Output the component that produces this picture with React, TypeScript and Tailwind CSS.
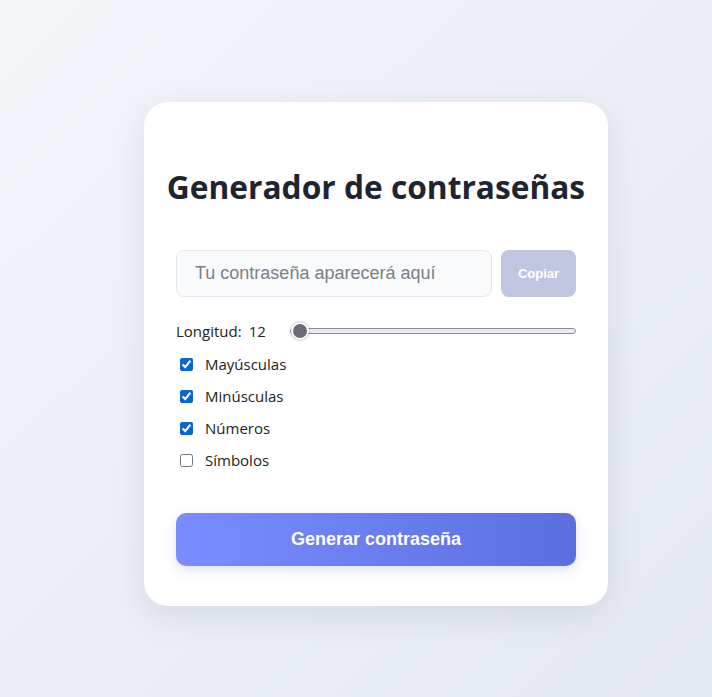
import { useState } from 'react';

const options = [
  { key: 'upper', label: 'Mayúsculas', checked: true },
  { key: 'lower', label: 'Minúsculas', checked: true },
  { key: 'numbers', label: 'Números', checked: true },
  { key: 'symbols', label: 'Símbolos', checked: false },
];

const App = () => {
  const [length, setLength] = useState(12);
  const [checks, setChecks] = useState<Record<string, boolean>>(
    Object.fromEntries(options.map((o) => [o.key, o.checked]))
  );

  return (
    <div className="min-h-screen w-full bg-gradient-to-br from-[#f3f5f9] to-[#e4e8f1] flex justify-center pl-[40px] pt-[102px] font-['Open_Sans',sans-serif]">
      <div className="w-[464px] h-[504px] bg-white rounded-[24px] shadow-[0_10px_30px_rgba(120,135,170,0.18)] px-8 pt-[66px]">
        {/* Title */}
        <h1 className="-mx-6 whitespace-nowrap text-center text-[31.7px] leading-[38px] font-bold text-[#1f2530]">
          Generador de contraseñas
        </h1>

        {/* Output */}
        <div className="flex gap-[9px] mt-[44px]">
          <input
            readOnly
            placeholder="Tu contraseña aparecerá aquí"
            className="w-[316px] h-[47px] rounded-[8px] border border-[#e2e7ee] bg-[#f8fafc] px-[18px] text-[18px] font-['Liberation_Sans',sans-serif] placeholder:text-[#7b8088] outline-none"
          />
          <button
            disabled
            className="w-[75px] h-[47px] rounded-[8px] bg-[#c0c6df] text-white text-[13px] font-bold font-['Liberation_Sans',sans-serif]"
          >
            Copiar
          </button>
        </div>

        {/* Length */}
        <div className="flex items-center mt-[24px] h-[20px] text-[15px] text-[#222]">
          <span>Longitud:</span>
          <span className="ml-[7px] w-[22px]">{length}</span>
          <input
            type="range"
            min={12}
            max={64}
            value={length}
            onChange={(e) => setLength(Number(e.target.value))}
            className="ml-[19px] flex-1 h-[6px] appearance-none rounded-full bg-[#ececf0] border border-[#8d8d99] outline-none [&::-webkit-slider-thumb]:appearance-none [&::-webkit-slider-thumb]:w-[18px] [&::-webkit-slider-thumb]:h-[18px] [&::-webkit-slider-thumb]:rounded-full [&::-webkit-slider-thumb]:bg-[#6a6a78] [&::-webkit-slider-thumb]:border-2 [&::-webkit-slider-thumb]:border-white [&::-webkit-slider-thumb]:shadow-[0_0_2px_rgba(0,0,0,0.5)]"
          />
        </div>

        {/* Options */}
        <div className="mt-[12px] flex flex-col gap-[10px]">
          {options.map((o) => (
            <label key={o.key} className="flex items-center h-[22px] text-[15px] text-[#222] cursor-pointer">
              <input
                type="checkbox"
                checked={checks[o.key]}
                onChange={() => setChecks((p) => ({ ...p, [o.key]: !p[o.key] }))}
                className="ml-[4px] w-[13px] h-[13px] accent-[#0b63d8]"
              />
              <span className="ml-[12px]">{o.label}</span>
            </label>
          ))}
        </div>

        {/* Generate */}
        <button className="mt-[42px] w-full h-[53px] rounded-[10px] bg-gradient-to-r from-[#7a8cff] to-[#5c6fe0] text-white text-[18px] font-bold font-['Liberation_Sans',sans-serif] shadow-[0_4px_12px_rgba(92,111,224,0.2)]">
          Generar contraseña
        </button>
      </div>
    </div>
  );
};

export default App;
